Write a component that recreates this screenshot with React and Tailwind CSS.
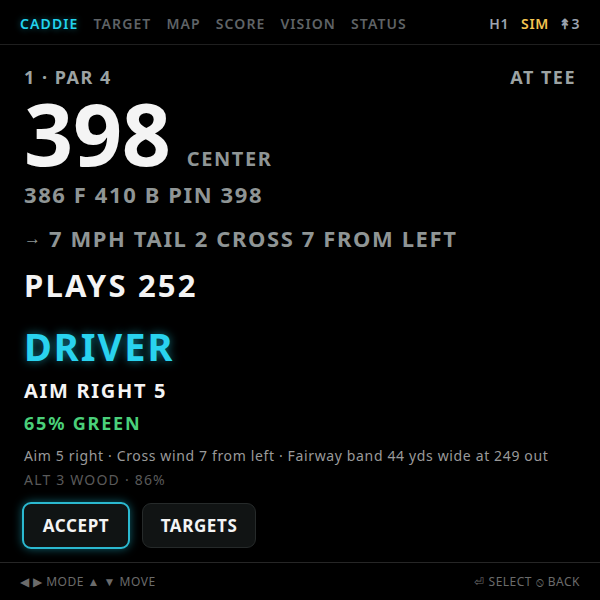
export default function App() {
  const tabs = ["CADDIE", "TARGET", "MAP", "SCORE", "VISION", "STATUS"];
  return (
    <div
      className="w-[600px] h-[600px] bg-black text-white flex flex-col overflow-hidden"
      style={{ fontFamily: '"Noto Sans", "Open Sans", sans-serif' }}
    >
      <header className="h-[45px] shrink-0 border-b border-[#1f1f1f] px-5 pt-[3px] flex items-center justify-between">
        <nav className="flex items-center gap-[15px] text-[14px] font-semibold tracking-[1.1px]">
          {tabs.map((t, i) => (
            <span
              key={t}
              className={i === 0 ? "text-[#22d3ee]" : "text-[#5f6366]"}
              style={i === 0 ? { textShadow: "0 0 6px rgba(34,211,238,0.45)" } : undefined}
            >
              {t}
            </span>
          ))}
        </nav>
        <div className="flex items-center gap-[12px] text-[14px] font-semibold tracking-[0.6px]">
          <span className="text-[#9ca3af]">H1</span>
          <span className="text-[#f5c451]">SIM</span>
          <span className="text-[#9ca3af] -ml-[2px]">↟3</span>
        </div>
      </header>

      <main className="flex-1 px-6 pt-[19px] flex flex-col">
        <div className="flex items-center justify-between text-[18px] font-bold text-[#9ca3a3] leading-[26px] tracking-[1.5px]">
          <span>1 · PAR 4</span>
          <span>AT TEE</span>
        </div>

        <div className="flex items-baseline gap-4">
          <span className="text-[86px] font-bold leading-[86px] text-[#f4f4f4] tracking-[-0.3px]">398</span>
          <span className="text-[20px] font-bold text-[#8f9595] tracking-[1.6px]">CENTER</span>
        </div>

        <div className="text-[22px] font-bold text-[#8f9595] leading-[30px] mt-[3px] tracking-[1.6px]">386 F 410 B PIN 398</div>
        <div className="text-[22px] font-bold text-[#8f9595] leading-[30px] mt-[14px] tracking-[1.6px] flex items-center">
          <span className="text-[17px] mr-[8px] tracking-normal">→</span>
          <span>7 MPH TAIL 2 CROSS 7 FROM LEFT</span>
        </div>
        <div className="text-[31px] font-bold text-[#f4f4f4] leading-[40px] mt-[12px] tracking-[2.2px]">PLAYS 252</div>

        <div
          className="text-[38px] font-bold text-[#29d3ef] leading-[46px] mt-[18px] tracking-[2px]"
          style={{ textShadow: "0 0 10px rgba(34,211,238,0.55)" }}
        >
          DRIVER
        </div>
        <div className="text-[20px] font-bold text-[#f4f4f4] leading-[28px] mt-[8px] tracking-[1.7px]">AIM RIGHT 5</div>
        <div className="text-[18px] font-bold text-[#4ad07a] leading-[26px] mt-[5px] tracking-[1.8px]">65% GREEN</div>
        <div className="text-[14px] text-[#9a9a9a] leading-[20px] mt-[10px] tracking-[0.64px]">
          Aim 5 right · Cross wind 7 from left · Fairway band 44 yds wide at 249 out
        </div>
        <div className="text-[14px] text-[#5a5a5a] leading-[20px] mt-[4px] tracking-[1.2px]">ALT 3 WOOD · 86%</div>

        <div className="flex items-center gap-[12px] mt-[12px] -ml-[2px]">
          <button
            className="h-[47px] w-[108px] rounded-[9px] border-2 border-[#2bb9d0] bg-[#101414] text-[17px] font-bold text-[#f4f4f4] tracking-[0.6px]"
            style={{ boxShadow: "0 0 10px rgba(34,211,238,0.45)" }}
          >
            ACCEPT
          </button>
          <button className="h-[45px] w-[114px] rounded-[9px] border border-[#262a2a] bg-[#111414] text-[17px] font-bold text-[#f4f4f4] tracking-[0.6px]">
            TARGETS
          </button>
        </div>
      </main>

      <footer className="h-[38px] shrink-0 border-t border-[#262626] px-5 flex items-center justify-between text-[12px] text-[#6b6b6b] tracking-[0.5px]">
        <span>◀ ▶ MODE ▲ ▼ MOVE</span>
        <span>⏎ SELECT ⦸ BACK</span>
      </footer>
    </div>
  );
}
